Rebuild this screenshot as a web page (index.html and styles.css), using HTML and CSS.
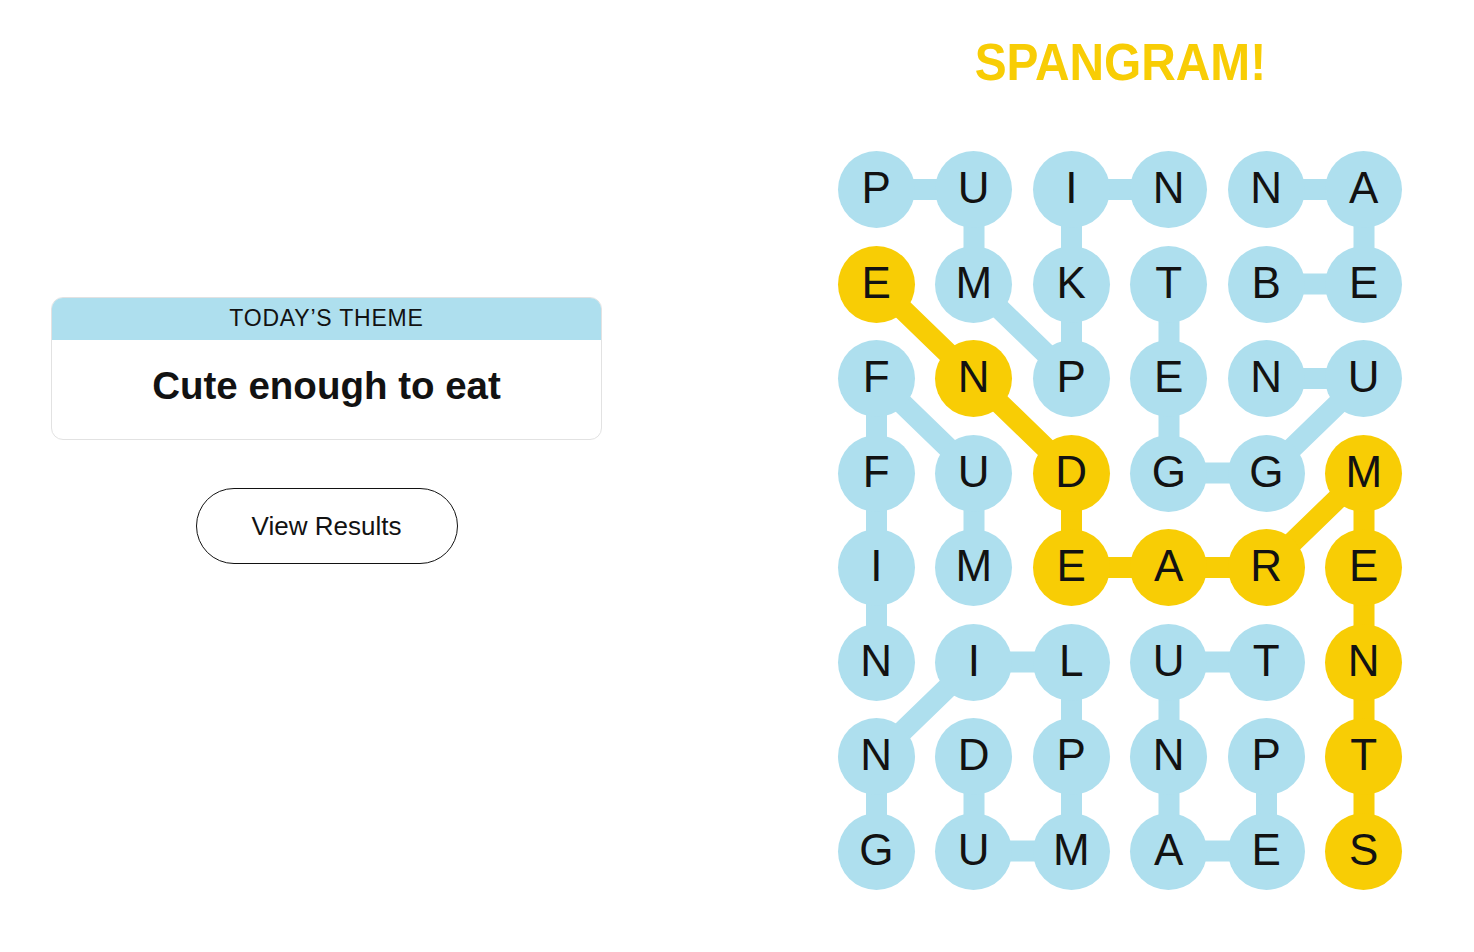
FILE: index.html
```html
<!DOCTYPE html>
<html lang="en">
<head>
<meta charset="utf-8">
<title>Strands</title>
<link rel="stylesheet" href="styles.css">
</head>
<body>
<main class="page">
  <section class="left">
    <div class="card">
      <div class="card-head">TODAY’S THEME</div>
      <div class="card-body">Cute enough to eat</div>
    </div>
    <button class="btn" type="button">View Results</button>
  </section>
  <section class="right">
    <h1 class="title"><span>SPANGRAM!</span></h1>
    <div class="board">
      <svg class="links" viewBox="0 0 564.5 738.5" width="564.5" height="738.5" aria-hidden="true">
        <g class="found">
          <polyline points="38.5,38.5 136,38.5 136,133 233.5,227.5 233.5,133 233.5,38.5 331,38.5"/>
          <polyline points="428.5,133 526,133 526,38.5 428.5,38.5"/>
          <polyline points="428.5,227.5 526,227.5 428.5,322 331,322 331,227.5 331,133"/>
          <polyline points="136,416.5 136,322 38.5,227.5 38.5,322 38.5,416.5 38.5,511"/>
          <polyline points="136,605.5 136,700 233.5,700 233.5,605.5 233.5,511 136,511 38.5,605.5 38.5,700"/>
          <polyline points="428.5,605.5 428.5,700 331,700 331,605.5 331,511 428.5,511"/>
        </g>
        <g class="span">
          <polyline points="38.5,133 136,227.5 233.5,322 233.5,416.5 331,416.5 428.5,416.5 526,322 526,416.5 526,511 526,605.5 526,700"/>
        </g>
      </svg>
      <div class="grid">
        <span class="cell">P</span><span class="cell">U</span><span class="cell">I</span><span class="cell">N</span><span class="cell">N</span><span class="cell">A</span>
        <span class="cell sp">E</span><span class="cell">M</span><span class="cell">K</span><span class="cell">T</span><span class="cell">B</span><span class="cell">E</span>
        <span class="cell">F</span><span class="cell sp">N</span><span class="cell">P</span><span class="cell">E</span><span class="cell">N</span><span class="cell">U</span>
        <span class="cell">F</span><span class="cell">U</span><span class="cell sp">D</span><span class="cell">G</span><span class="cell">G</span><span class="cell sp">M</span>
        <span class="cell">I</span><span class="cell">M</span><span class="cell sp">E</span><span class="cell sp">A</span><span class="cell sp">R</span><span class="cell sp">E</span>
        <span class="cell">N</span><span class="cell">I</span><span class="cell">L</span><span class="cell">U</span><span class="cell">T</span><span class="cell sp">N</span>
        <span class="cell">N</span><span class="cell">D</span><span class="cell">P</span><span class="cell">N</span><span class="cell">P</span><span class="cell sp">T</span>
        <span class="cell">G</span><span class="cell">U</span><span class="cell">M</span><span class="cell">A</span><span class="cell">E</span><span class="cell sp">S</span>
      </div>
    </div>
  </section>
</main>
</body>
</html>
```
FILE: styles.css
```css
* { box-sizing: border-box; }

html, body {
  margin: 0;
  padding: 0;
  background: #ffffff;
}

body {
  font-family: "Liberation Sans", Arial, sans-serif;
  color: #121212;
}

.page {
  display: flex;
  height: 952px;
}

.left {
  width: 653px;
  padding-top: 297px;
  display: flex;
  flex-direction: column;
  align-items: center;
}

.card {
  width: 551px;
  border: 1px solid #e2e2e2;
  border-radius: 12px;
  overflow: hidden;
  background: #fff;
}

.card-head {
  margin: -1px -1px 0;
  height: 43px;
  background: #aedfee;
  display: flex;
  align-items: center;
  justify-content: center;
  font-size: 23px;
  letter-spacing: 0.8px;
  color: #121212;
}

.card-body {
  height: 99px;
  padding-top: 23px;
  line-height: 46px;
  text-align: center;
  font-size: 38.5px;
  font-weight: 700;
  color: #121212;
}

.btn {
  margin-top: 48px;
  width: 262px;
  height: 76px;
  border: 1px solid #121212;
  border-radius: 38px;
  background: #fff;
  font-family: "Liberation Sans", Arial, sans-serif;
  font-size: 26px;
  color: #121212;
  padding: 0;
  cursor: pointer;
}

.right {
  flex: 1;
  padding-left: 113px;
  padding-top: 36px;
  display: flex;
  flex-direction: column;
  align-items: center;
}

.title {
  margin: 0 0 63px;
  font-size: 52px;
  line-height: 52px;
  font-weight: 700;
  color: #f8cd05;
}

.title span {
  display: inline-block;
  transform: scaleX(0.92);
}

.board {
  position: relative;
  width: 564.5px;
  height: 738.5px;
}

.links {
  position: absolute;
  left: 0;
  top: 0;
}

.links polyline {
  fill: none;
  stroke-width: 21;
  stroke-linejoin: round;
}

.links .found polyline { stroke: #aedfee; }
.links .span polyline { stroke: #f8cd05; }

.grid {
  position: relative;
  display: grid;
  grid-template-columns: repeat(6, 77px);
  grid-auto-rows: 77px;
  column-gap: 20.5px;
  row-gap: 17.5px;
}

.cell {
  width: 77px;
  height: 77px;
  border-radius: 50%;
  background: #aedfee;
  display: flex;
  align-items: center;
  justify-content: center;
  font-size: 44px;
  line-height: 1;
  padding-bottom: 3px;
  color: #121212;
}

.cell.sp { background: #f8cd05; }
```
